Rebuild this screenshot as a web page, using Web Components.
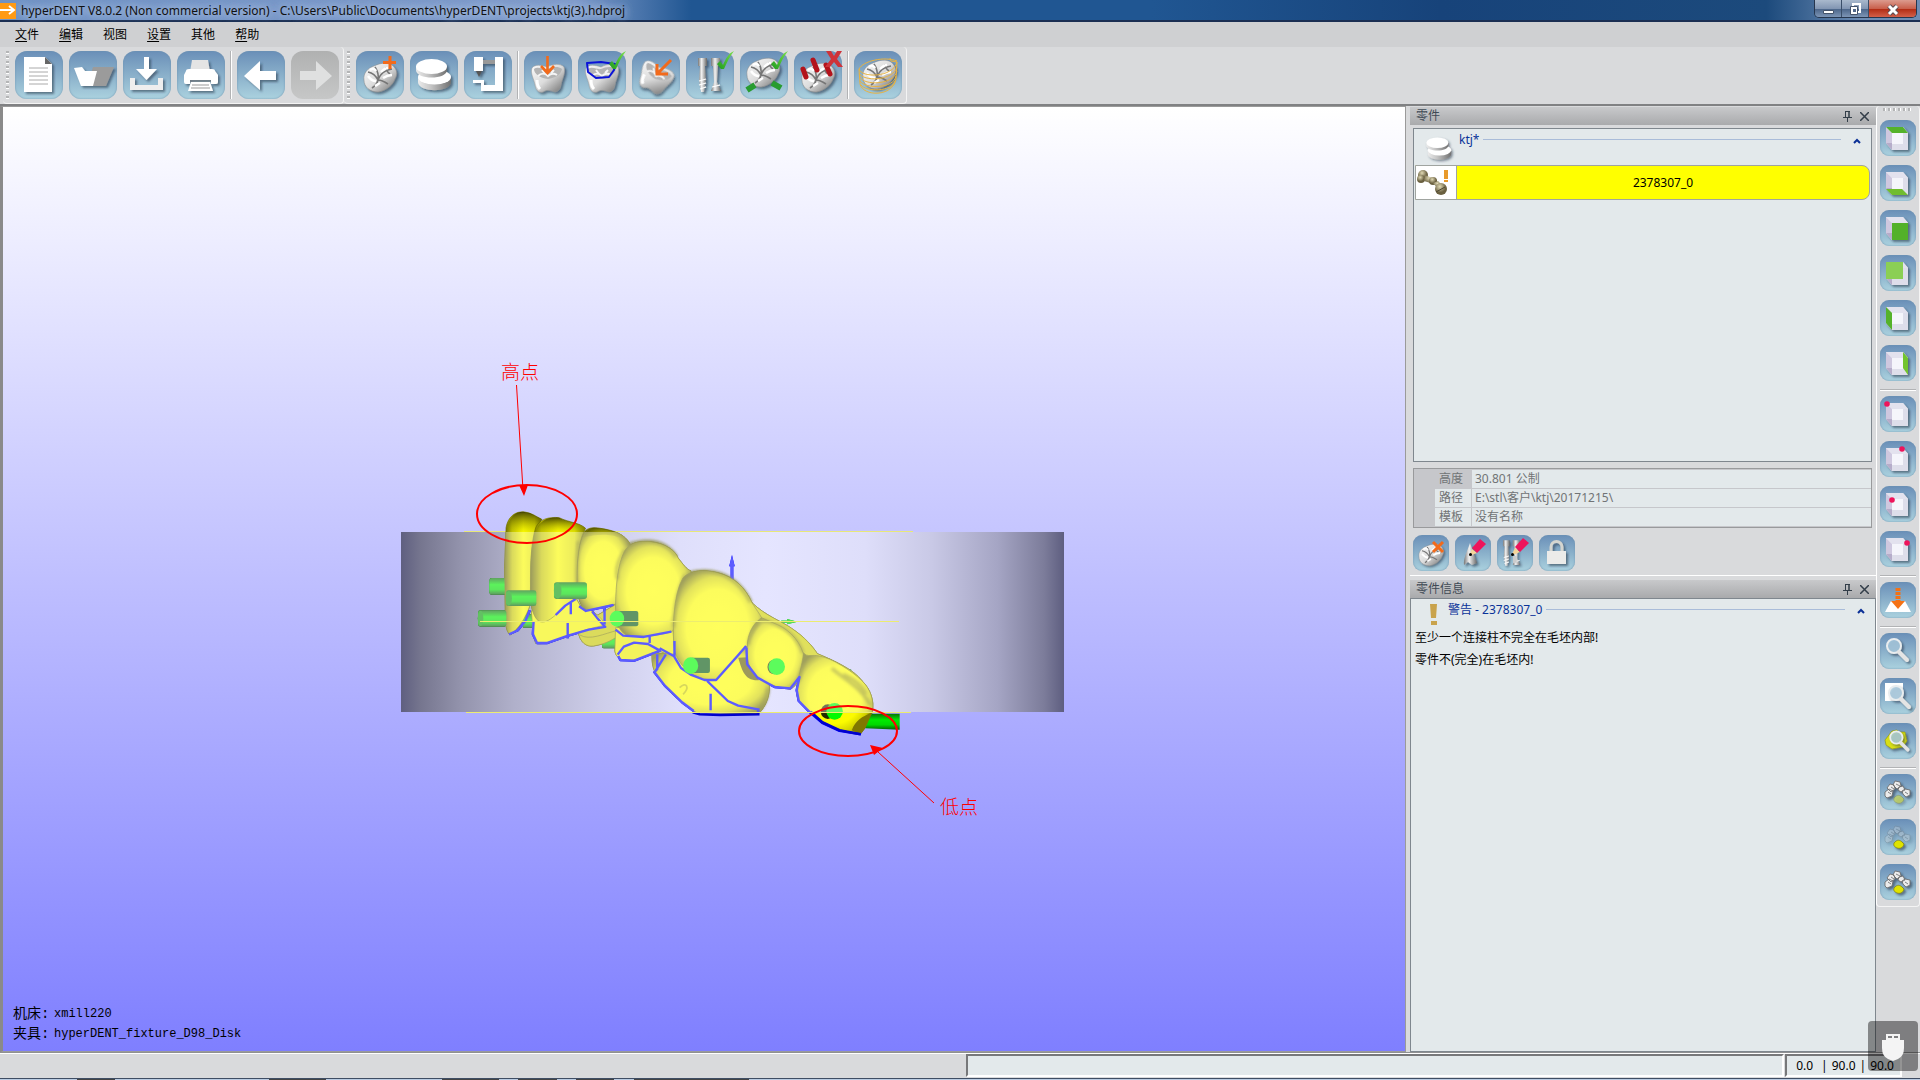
<!DOCTYPE html>
<html lang="zh-CN">
<head>
<meta charset="utf-8">
<meta name="viewport" content="width=device-width, initial-scale=1">
<title>hyperDENT V8.0.2</title>
<style>
  html, body { height: 100%; margin: 0; }
  body {
    font: 12px/16px "Noto Sans", "Noto Sans CJK SC", sans-serif;
    color: #111;
    background: #d9dadc;
    overflow: hidden;
  }
</style>
</head>
<body>
<dent-app></dent-app>

<script>
// Shared gradients, every icon svg carries its own copy because ids are scoped to the shadow root
const ICON_DEFS = `
  <defs>
    <linearGradient id="w" x1="0" y1="0" x2="1" y2="1"><stop offset="0" stop-color="#fbfbfb"/><stop offset=".5" stop-color="#dcdcdc"/><stop offset="1" stop-color="#6d6d6d"/></linearGradient>
    <linearGradient id="m" x1="0" x2="1"><stop offset="0" stop-color="#777"/><stop offset=".4" stop-color="#f2f2f2"/><stop offset="1" stop-color="#666"/></linearGradient>
    <linearGradient id="d" x1="0" x2="1"><stop offset="0" stop-color="#ececec"/><stop offset=".4" stop-color="#c4c4c4"/><stop offset="1" stop-color="#707070"/></linearGradient>
    <linearGradient id="g" x1="0" y1="1" x2="1" y2="0"><stop offset="0" stop-color="#1e9c1e"/><stop offset="1" stop-color="#7be04c"/></linearGradient>
    <filter id="s" x="-20%" y="-20%" width="150%" height="150%"><feDropShadow dx="2" dy="2" stdDeviation="1.2" flood-color="#234" flood-opacity=".55"/></filter>
    <filter id="b" x="-10%" y="-10%" width="120%" height="120%"><feGaussianBlur stdDeviation=".6"/></filter>
  </defs>`;

const TOOTH_TOP = `<g filter="url(#s)"><path d="M8 29C7 22 12 17 18 15c6-3 13-4 18-1 5 4 6 9 3 14-2 6-9 12-17 13C14 41 8 36 8 29z" fill="url(#w)" stroke="#888" stroke-width=".5"/>
  <g fill="none" filter="url(#b)"><path d="M12 21c5 1 8 4 10 8 2-6 7-10 14-11M22 29c4 0 7 2 10 4M19 16c2 3 4 8 3 13-1 4-3 6-6 8M30 16c0 3 1 5 4 7" stroke="#767676" stroke-width="1.600"/>
  <path d="M12 25c2 3 4 5 8 5M14 19c3-2 5-1 6 1M25 21c2-2 4-4 7-4M27 27c3-2 6-3 9-3M19 35c2-1 3-2 5-3" stroke="#fff" stroke-width="2.400"/></g></g>`;
const TOOTH_SIDE = `<g filter="url(#s)"><path d="M8 17c3-4 9-3 15-1 6-3 13-4 17 0 2 6-2 12-3 18-1 6-5 8-9 6-4-1-6-1-9 1-5 1-7-2-8-7C10 28 6 22 8 17z" fill="url(#w)" stroke="#999" stroke-width=".5"/>
  <g filter="url(#b)"><path d="M10 18c5-3 9 1 13 0 5-2 11-3 15 0-1 6-7 9-14 10C16 27 10 23 10 18z" fill="#b4b4b4"/>
  <path d="M14 25c3-3 7-3 10 0 3-3 6-3 9-1M18 19l3 4M30 19l-3 3" stroke="#f4f4f4" stroke-width="2" fill="none"/>
  <path d="M13 29c0 4 1 7 3 9" stroke="#fff" stroke-width="3" fill="none"/></g></g>`;
const CHECK = `<path d="M31 13l3-3 3 4C40 7 43 2 48 0 44 5 41 11 38 18h-3z" fill="url(#g)"/>`;
const DISKS = `<g filter="url(#s)"><path d="M8 26v5c0 11 33 11 33 0v-5z" fill="url(#d)"/><ellipse cx="24.500" cy="26" rx="16.500" ry="7.500" fill="#fff"/><path d="M6 15v4c0 10 31 10 31 0v-4z" fill="url(#d)"/><ellipse cx="21.500" cy="15.500" rx="15.500" ry="7.500" fill="#fff"/></g>`;
const LENS = `<circle cx="14" cy="13" r="7" fill="#a9cbe0" fill-opacity=".8" stroke="#e9edef" stroke-width="2"/><path d="M19 19l8 8" stroke="#e4e4e4" stroke-width="4" stroke-linecap="round"/>`;

// The view cube; face is the highlighted polygon, dot the highlighted corner
function cube(face, dot) {
  return `<g filter="url(#s)"><path d="M6 7h17l5 6v17H12l-6-7z" fill="#dedeea"/>
    <path d="M6 7l6 6v17l-6-7z" fill="#cfc8df"/><path d="M6 23h6v7z" fill="#b6adca"/><path d="M6 7h17l5 6H12z" fill="#e3e2ee"/>
    <path d="M12 13h11v11H12z" fill="#f5f5fb"/>${face || ''}</g>${dot ? `<circle cx="${dot[0]}" cy="${dot[1]}" r="2.8" fill="#ee145b"/>` : ''}`;
}

// Tooth arch with one separate tooth in front
function arch(body, tooth) {
  return `<g filter="url(#s)"><g opacity="${body}" fill="#ececec" stroke="#666" stroke-width=".8">
    <path d="M5 18l4-3 4 2-1 5-5 2-2-2zM7 14l3-4 4 1 1 4-4 3zM13 11l2-4 5 1 1 4-4 3zM19 13l4-1 2 4-4 2-3-2zM22 17l3-2 5 1v5l-4 2-3-3z"/>
    <path d="M8 18l3 2M11 13l3 2M16 10l4 2M25 18l3 2" fill="none"/></g>
    <path d="M14 24c3-4 6-3 8-1l2 2c-1 4-4 5-7 4-2-1-4-2-3-5z" fill="#dfe300" stroke="#777a10" stroke-width=".7" opacity="${tooth}"/></g>`;
}

const IMPLANTS = `<g filter="url(#s)" fill="url(#m)"><path d="M12 7h9v8h-2l1 14-2 12h-3l-2-12 1-14h-2z"/><path d="M25 7h9v8h-2l-1 16 4 9H25l3-9-1-16h-2z"/><path d="M13 30l7-2M13 34l7-2M14 38l6-2M26 36l8-2" stroke="#fff" stroke-width="1.2"/></g>`;

const ICONS = {
  'new': `<g filter="url(#s)"><path d="M9 6h21l7 7v28H9z" fill="#fff"/><path d="M30 6v7h7z" fill="#666"/></g><path d="M14 17h19M14 21h19M14 25h19M14 29h19M14 33h19" stroke="#aaa"/>`,
  'open': `<g filter="url(#s)"><path d="M18 35l6-19h21l-8 19z" fill="#9b9b9b"/><path d="M5 17l8-1 3 4h12l-4 15H12z" fill="#fff"/></g>`,
  'save': `<g filter="url(#s)"><path d="M7 27h5v7h23v-7h5v12H7z" fill="#eee"/><path d="M21 6h5v12h8L23.500 29 13 18h8z" fill="#fff"/></g>`,
  'print': `<g filter="url(#s)"><path d="M15 9h16l2 12H13z" fill="#e4e4e4"/><path d="M9 20q0-2 3-2h23q3 0 3 2l3 4v7q0 2-2 2h-5v-4H13v4H9q-2 0-2-2v-7z" fill="#fff"/><path d="M14 31h19l3 9H11z" fill="#fff"/></g><path d="M13 30h21" stroke="#888"/><path d="M15 34h17M14 37h19" stroke="#999"/>`,
  'undo': `<path filter="url(#s)" d="M7 25L23 10v10h16v9H23v10z" fill="#fff"/>`,
  'redo': `<path d="M41 25L25 10v10H9v9h16v10z" fill="#dfe0e0"/>`,
  'part-add': TOOTH_TOP + `<path d="M34 5v13M27 11.500h13" stroke="#f26a1b" stroke-width="3"/>`,
  'blank': DISKS,
  'machine': `<g filter="url(#s)"><path d="M19 9h14v4H19z" fill="#999"/><path d="M31 6h8v34H17v-8h-8v-3h11v5h11zM10 6h9v14h-9z" fill="#fff"/><path d="M12 20h6l-3 6z" fill="#555"/></g>`,
  'insert': TOOTH_SIDE + `<path d="M23.500 5v17M17 15l6.500 7 6.500-7" stroke="#f26a1b" stroke-width="2.600" fill="none"/>`,
  'margin': TOOTH_SIDE + `<path d="M9 12l14-1 14 2-1 6-5 7-13 1-8-6z" stroke="#0a12d8" stroke-width="2" fill="none" stroke-linejoin="round"/>` + CHECK,
  'direction': `<g transform="rotate(28 24 25)">${TOOTH_SIDE}</g><path d="M39 9L25 23M25 13v10h11" stroke="#f26a1b" stroke-width="3" fill="none"/>`,
  'implants': IMPLANTS + CHECK,
  'connectors': `<g transform="translate(-1 -5)">${TOOTH_TOP}</g><path d="M7 39l8-5M32 32l9 5" stroke="#289c30" stroke-width="6"/>` + CHECK,
  'sinter': TOOTH_TOP + `<path d="M9 18l3 8M19 9l4 10M32 14l4 9" stroke="#b3131b" stroke-width="5" stroke-linecap="round"/><path d="M32 0h5l3 5 3-5h5l-5 8 6 8h-5l-4-5-4 5h-5l6-8z" fill="#cf3239"/>`,
  'toolpath': `<g transform="translate(1 -3)">${TOOTH_TOP}</g><g fill="none" stroke="#e8b342"><path d="M5 18C9 10 30 5 43 10M5 18c2 9 34 9 38-7l-1 17c-3 18-33 18-36 5z"/><path d="M5 22c4 9 34 8 38-6M6 26c4 9 34 8 37-6M6 30c5 8 34 8 36-5M7 34c5 7 31 7 34-4M36 7l1 3 6 1"/></g>`,
  'view-top': cube('<path d="M6 7h17l5 6H12z" fill="#55b22b"/>'),
  'view-bottom': cube('<path d="M6 24h16l6 6H12z" fill="#6fbd2d"/>'),
  'view-front': cube('<path d="M12 13h16v17H12z" fill="#52b12c"/>'),
  'view-back': cube('<path d="M6 7h17v17H6z" fill="#8bcf55"/>'),
  'view-left': cube('<path d="M6 7l6 6v17l-6-7z" fill="#55b22b"/>'),
  'view-right': cube('<path d="M23 7l5 6v17l-5-7z" fill="#72c42d"/>'),
  'iso-1': cube('', [7, 8]),
  'iso-2': cube('', [22, 8]),
  'iso-3': cube('', [12, 14]),
  'iso-4': cube('', [27, 12]),
  'project': `<path d="M11 19h14l6 11H5z" fill="#fff"/><path d="M18 6v14" stroke="#f47216" stroke-width="5" stroke-dasharray="3 1"/><path d="M11 19h14l-7 8z" fill="#f47216"/>`,
  'zoom': `<g filter="url(#s)">${LENS}</g>`,
  'zoom-window': `<path d="M5 5h18v18H5z" fill="#fff"/><g filter="url(#s)" transform="translate(2 2)">${LENS}</g>`,
  'zoom-part': `<path filter="url(#s)" d="M5 17l7-9 5-1 2 2 6 0 2 9-4 6-11 2-6-4z" fill="#d8df12" stroke="#8b9010" stroke-width=".6"/><g filter="url(#s)" transform="translate(4 3) scale(.88)">${LENS}</g>`,
  'arch-all': arch(1, .45),
  'arch-part': arch(.25, 1),
  'arch-both': arch(1, 1),
  'part-delete': `<g transform="scale(.75)">${TOOTH_TOP}</g><path d="M20 7l10 10M30 7L20 17" stroke="#f26a1b" stroke-width="3"/>`,
  'part-edit': `<path filter="url(#s)" d="M15 8c-2 6-7 16-6 22l4-3 4 3 5-2-3-9z" fill="url(#m)"/><path d="M14 21l3-7 5 4z" fill="#f5d59b"/><path d="M17 13l8-9 6 5-9 9z" fill="#ee145b"/><circle cx="15.500" cy="19.500" r="1.500"/>`,
  'implant-edit': `<g transform="translate(-3 0) scale(.75)">${IMPLANTS}</g><g transform="translate(10 0) scale(.75)"><path d="M8 28h5v9H8z" fill="#ccc"/></g><path d="M14 21l4-8 5 4z" fill="#f5d59b"/><path d="M18 12l8-9 6 5-9 9z" fill="#ee145b"/><circle cx="15.500" cy="19.500" r="1.500"/>`,
  'lock': `<g filter="url(#s)"><path d="M12 17v-5a5.500 5.500 0 0 1 11 0v5" fill="none" stroke="#d5d5d0" stroke-width="3"/><path d="M8 16h19v13H8z" fill="#ebebe9"/></g>`
};

class ToolButton extends HTMLElement {
  connectedCallback() {
    const small = this.hasAttribute('small');
    const box = small ? 36 : 48;
    this.attachShadow({ mode: 'open' });
    this.shadowRoot.innerHTML = `
      <style>
        :host { display: block; flex: none; }
        button {
          display: block;
          width: ${box}px;
          height: ${box}px;
          padding: 0;
          border: 0;
          border-radius: ${small ? 9 : 12}px;
          background: linear-gradient(#6a8fb8, #8db3cc 55%, #abd2df);
          box-shadow: inset 0 0 2px #6d91ae;
        }
        button:disabled { background: linear-gradient(#b0b1b1, #c6c7c7); box-shadow: none; }
        svg { display: block; overflow: visible; }
      </style>
      <button type="button" aria-label="${this.getAttribute('label')}" ${this.hasAttribute('disabled') ? 'disabled' : ''}>
        <svg width="${box}" height="${box}" viewBox="0 0 ${box} ${box}">${ICON_DEFS}${ICONS[this.getAttribute('icon')]}</svg>
      </button>
    `;
  }
}
customElements.define('tool-button', ToolButton);

class TitleBar extends HTMLElement {
  connectedCallback() {
    this.attachShadow({ mode: 'open' });
    this.shadowRoot.innerHTML = `
      <style>
        :host {
          display: flex;
          align-items: flex-start;
          height: 20px;
          border-bottom: 2px solid #1a2e52;
          background: linear-gradient(90deg, #6f92c4 0, #7d9aca 30%, #205692 36%, #205692 60%, #17437a 75%, #1c4a7c 92%, #6d8cb4 97%);
        }
        .logo { width: 16px; height: 16px; margin-top: 3px; background: #ff9a13; }
        .logo svg { display: block; }
        h1 {
          margin: 0 0 0 5px;
          font-size: 12px;
          font-weight: 400;
          line-height: 21px;
          white-space: nowrap;
          text-shadow: 0 0 8px #b9cbe8, 0 0 8px #b9cbe8;
        }
        .controls {
          display: flex;
          margin-left: auto;
          margin-right: 3px;
          border: 1px solid #26364e;
          border-top: 0;
          border-radius: 0 0 5px 5px;
          overflow: hidden;
        }
        button {
          width: 27px;
          height: 17px;
          padding: 0;
          border: 0;
          border-right: 1px solid #3a4e69;
          background: linear-gradient(#a9b9cd, #8296b3 50%, #4a6488 52%, #7d95b5);
        }
        .close { width: 47px; border-right: 0; background: linear-gradient(#dc9b8e, #c9604c 50%, #b02a12 52%, #d3604a); }
        button svg { display: block; margin: auto; }
      </style>
      <span class="logo"><svg width="16" height="16" viewBox="0 0 16 16"><path d="M0 7h13M9 3l5 4-5 4" fill="none" stroke="#fff" stroke-width="2"/></svg></span>
      <h1><slot></slot></h1>
      <div class="controls">
        <button type="button" aria-label="最小化"><svg width="14" height="14"><path d="M2.500 8.500h10v3h-10z" fill="#fff" stroke="#44536a"/></svg></button>
        <button type="button" aria-label="还原"><svg width="14" height="14"><path d="M5 2h7v8H5z" fill="none" stroke="#fff" stroke-width="2"/><path d="M2.500 4.500h7v8h-7z" fill="#fff" stroke="#44536a"/><path d="M5 7h3v3H5z" fill="#53698a"/></svg></button>
        <button type="button" class="close" aria-label="关闭"><svg width="14" height="14"><path d="M3 4l8 8M11 4l-8 8" stroke="#5c4b52" stroke-width="5"/><path d="M3 4l8 8M11 4l-8 8" stroke="#fff" stroke-width="3"/></svg></button>
      </div>
    `;
  }
}
customElements.define('title-bar', TitleBar);

class MenuBar extends HTMLElement {
  connectedCallback() {
    const items = this.getAttribute('items').split(',');
    this.attachShadow({ mode: 'open' });
    this.shadowRoot.innerHTML = `
      <style>
        :host { display: block; background: #cfd0d2; }
        nav { display: flex; gap: 20px; height: 25px; padding-left: 15px; }
        button { padding: 0; border: 0; background: none; font: inherit; color: #000; }
        u { text-underline-offset: 2px; }
      </style>
      <nav>${items.map(t => `<button type="button">${t.replace(/^_(.)/, '<u>$1</u>')}</button>`).join('')}</nav>
    `;
  }
}
customElements.define('menu-bar', MenuBar);

class ToolBar extends HTMLElement {
  connectedCallback() {
    this.attachShadow({ mode: 'open' });
    this.shadowRoot.innerHTML = `
      <style>
        :host {
          display: flex;
          gap: 6px;
          padding: 4px 4px 4px 3px;
          border-right: 1px solid #f4f4f4;
          border-bottom: 1px solid #f4f4f4;
          border-radius: 4px;
        }
        .grip { width: 3px; background: repeating-linear-gradient(#b4b5b6 0 2px, #fff 2px 3px, transparent 3px 5px); }
        :host([vertical]) { flex-direction: column; gap: 9px; padding: 2px 3px 6px; border-left: 1px solid #fff; }
        :host([vertical]) .grip {
          height: 3px;
          width: auto;
          margin: 0 3px;
          background: repeating-linear-gradient(90deg, #b4b5b6 0 2px, #fff 2px 3px, transparent 3px 5px);
        }
        ::slotted(hr) { width: 2px; margin: 0 -1px; border: 0; background: linear-gradient(90deg, #b2b3b5 50%, #fff 50%); }
        :host([vertical]) ::slotted(hr) { width: auto; height: 2px; margin: -1px 0 -4px; background: linear-gradient(#b2b3b5 50%, #fff 50%); }
      </style>
      <span class="grip"></span>
      <slot></slot>
    `;
  }
}
customElements.define('tool-bar', ToolBar);

// 3D view: blank, bridge with connectors, and the two annotations
class ModelViewport extends HTMLElement {
  connectedCallback() {
    this.attachShadow({ mode: 'open' });
    this.shadowRoot.innerHTML = `
      <style>
        :host {
          display: block;
          position: relative;
          min-width: 0;
          overflow: hidden;
          background: linear-gradient(#fff, #7f7fff);
          border: 1px solid #9a9a9a;
          border-left: 3px solid #8a8a8a;
        }
        svg { display: block; position: absolute; inset: 0; width: 100%; height: 100%; }
        dl {
          position: absolute;
          left: 10px;
          bottom: 7px;
          margin: 0;
          font: 12px/20px "Liberation Mono", "Noto Sans CJK SC", monospace;
          color: #000;
        }
        dl div { display: flex; }
        dt { width: 41px; font-size: 14px; }
        dd { margin: 0; }
        .note { font: 300 19px "Noto Sans CJK SC", sans-serif; fill: #f00; }
      </style>
      <svg viewBox="3 107 1402 942" role="img" aria-label="模型视图">
        <defs>
          <linearGradient id="disk">
            <stop offset="0" stop-color="#5f5f80"/><stop offset=".03" stop-color="#76768f"/><stop offset=".09" stop-color="#9393ac"/>
            <stop offset=".17" stop-color="#b0b0ca"/><stop offset=".3" stop-color="#cdcde9"/><stop offset=".42" stop-color="#dfdffb"/>
            <stop offset=".55" stop-color="#e5e5ff"/><stop offset=".7" stop-color="#dedefa"/><stop offset=".8" stop-color="#c9c9e6"/>
            <stop offset=".9" stop-color="#a5a5c4"/><stop offset=".97" stop-color="#7c7c9a"/><stop offset="1" stop-color="#5e5e80"/>
          </linearGradient>
          <radialGradient id="t" cx=".5" cy=".52" r=".58">
            <stop offset="0" stop-color="#ff0"/><stop offset=".6" stop-color="#fbfb00"/><stop offset=".8" stop-color="#d2d200"/><stop offset="1" stop-color="#6a6a00"/>
          </radialGradient>
          <linearGradient id="t1" x2="1"><stop offset="0" stop-color="#626200"/><stop offset=".2" stop-color="#c4c400"/><stop offset=".5" stop-color="#fafa00"/><stop offset=".8" stop-color="#e0e000"/><stop offset="1" stop-color="#7c7c00"/></linearGradient>
          <linearGradient id="cap" x2="0" y2="1"><stop offset="0" stop-color="#222200" stop-opacity=".8"/><stop offset="1" stop-color="#8c8c00" stop-opacity="0"/></linearGradient>
          <linearGradient id="rod" x2="0" y2="1"><stop offset="0" stop-color="#086e08"/><stop offset=".4" stop-color="#00ea00"/><stop offset=".7" stop-color="#00d800"/><stop offset="1" stop-color="#055c05"/></linearGradient>
          <filter id="veil" color-interpolation-filters="sRGB" x="0" y="0" width="1" height="1">
            <feColorMatrix values=".64 0 0 0 .36  0 .64 0 0 .36  0 0 .64 0 .36  0 0 0 1 0"/>
          </filter>
          <filter id="soft"><feGaussianBlur stdDeviation="4"/></filter>
          <clipPath id="inside"><rect x="401" y="531" width="663" height="180"/></clipPath>
          <g id="model" transform="translate(380 340) scale(.3444 .3333)">
            <g stroke="#707000" stroke-width="2">
              <path d="M1022 720V672" stroke="#00f" stroke-width="8"/><path d="M1022 642l8 34h-16z" fill="#00f" stroke="none"/>
              <path d="M1165 842h25" stroke="#0c0" stroke-width="6"/><path d="M1182 834l30 8-30 8z" fill="#0c0" stroke="none"/>
              <g fill="url(#rod)" stroke="none"><rect x="318" y="711" width="50" height="50" rx="6"/><rect x="645" y="880" width="45" height="42" rx="5"/><rect x="415" y="820" width="30" height="40"/><rect x="1350" y="986" width="18" height="20"/></g>
              <path d="M575 870C580 905 600 918 620 915C650 910 670 900 692 885L685 790L620 830Z" fill="#c6c600"/>
              <path d="M580 882c30 18 70-4 110-14" fill="none"/>
              <path d="M440 810C442 850 445 880 452 907C480 912 510 898 545 886C580 870 620 860 655 852C640 825 620 810 582 795L568 770L480 800Z" fill="#f4f400"/>
              <path d="M684 860L682 930C685 950 700 960 730 958C760 955 790 935 812 930L858 950L850 860Z" fill="#ecec00"/>
              <path d="M790 935C788 970 795 990 805 1005C830 1045 880 1090 915 1115L1100 1118C1125 1090 1132 1060 1130 1030L1060 910L860 940Z" fill="url(#t)"/>
              <path d="M1040 950c10 30 15 70 60 68l-20-70z" fill="#666000" stroke="none"/>
              <path d="M1080 785C1120 825 1165 840 1195 862C1235 890 1255 915 1270 938C1320 960 1375 985 1400 1020L1300 1060L1080 900Z" fill="#cfcf00"/>
              <path d="M366 560C372 525 395 510 420 513C440 515 455 528 470 535C450 560 438 620 438 680L436 790C425 830 400 865 378 882C366 870 364 850 364 820L362 680Z" fill="url(#t1)"/>
              <path d="M592 575C600 560 620 558 640 562C680 568 710 580 725 607L710 780L682 790C650 795 620 808 595 806C575 790 570 740 572 690C573 640 580 600 592 575Z" fill="url(#t)"/>
              <path d="M452 560C462 535 490 527 520 530C550 545 580 545 597 562C575 600 572 660 572 720L568 775C540 790 530 800 510 822C490 840 475 848 460 840C440 820 437 790 437 740C436 660 440 600 452 560Z" fill="url(#t1)"/>
              <path d="M710 630C725 605 750 600 785 602C830 607 858 630 865 650C880 670 890 685 903 690L880 820L848 872C810 885 760 888 720 884C690 875 682 830 684 790C685 730 690 670 710 630Z" fill="url(#t)"/>
              <path d="M1066 915C1064 870 1080 835 1108 830L1140 845C1180 860 1215 890 1230 940C1232 960 1225 980 1218 1010C1210 1030 1200 1042 1190 1044C1150 1040 1110 1025 1090 1000C1070 980 1062 950 1066 915Z" fill="url(#t)"/>
              <path d="M880 710C900 688 940 685 980 695C1030 708 1060 740 1080 785C1095 810 1100 815 1108 830C1080 850 1068 880 1066 915C1040 940 1010 980 975 1018C950 1018 930 1012 905 1000C880 980 865 960 855 930C848 880 850 760 880 710Z" fill="url(#t)"/>
              <path d="M1230 935C1240 950 1255 940 1275 945C1310 950 1370 990 1400 1020C1425 1045 1435 1080 1430 1110C1425 1140 1405 1165 1395 1180C1340 1175 1290 1150 1255 1118C1225 1090 1208 1080 1210 1045C1215 1000 1225 980 1230 935Z" fill="url(#t)"/>
            </g>
            <path d="M368 574C372 525 395 510 420 513C440 515 455 528 470 535L455 574Z" fill="url(#cap)"/>
            <path d="M452 574C462 535 490 527 520 530C550 545 580 545 597 562L590 574Z" fill="url(#cap)"/>
            <path d="M592 590C600 560 620 558 640 562C680 568 710 580 722 605C690 580 640 575 592 590Z" fill="url(#cap)" opacity=".6"/>
            <path d="M1370 1168c10-30 30-40 58-54-2 25-18 50-34 66z" fill="#807800"/>
            <g fill="none" stroke="#6b6b00" stroke-width="10" opacity=".55" filter="url(#soft)">
              <path d="M712 625c-20 30-30 60-22 90M886 700c-28 60-32 110-34 160M1100 842c-20 30-30 50-30 70M720 612c60-20 110-10 140 36M890 700c60-20 140-10 186 84M1110 836c60 16 100 46 118 100M1312 982c30 30 80 50 112 110M1238 950c-10 20-20 44-22 70M576 600c-6 60-6 120-2 170M1126 1040c0 20-10 50-26 66M1345 1000c20 10 50 24 66 60"/>
            </g>
            <path d="M870 1040c20-20 30 0 10 20" fill="none" stroke="#999900" stroke-width="5" opacity=".6"/>
            <g fill="none" stroke="#00f" stroke-width="7" stroke-linejoin="round">
              <path d="M375 880l25-12 22-28 13-32M446 840l-2 40 12 26h30l60-22 60-18 48-8-24-28-14-18M568 774l-30 20-28 28M554 782v38M545 846v46M578 796l20 14 80-18M652 800v50"/>
              <path d="M684 866l22 18 60 4 80-16M783 886v20M692 945l6 12 40 2 75-30-35-20-40-4-30 12-18 24M812 922l42 24 20 35 28 20 40 16h34l60-70 27-32M855 900v48M805 940v44l-8 10 30 40 50 50 34 26M830 940l-30 50M960 1058v50M950 1020l60 60 30 14 62 12"/>
              <path d="M1064 920l2 50 30 40 50 28 46 4 26-34-8 40 6 32 34 36 34 30 50 24 62 10"/>
            </g>
            <path d="M908 1114l20 6 60 2 110-2v-14M1250 1112l34 32 50 24 62 12" fill="none" stroke="#00c" stroke-width="8"/>
            <g fill="url(#rod)"><rect x="366" y="748" width="88" height="47" rx="7"/><rect x="285" y="808" width="82" height="49" rx="7"/><rect x="505" y="724" width="96" height="50" rx="8"/><rect x="680" y="810" width="70" height="46" rx="6" fill="#085a10"/><rect x="900" y="950" width="58" height="46" rx="6" fill="#085a10"/><path d="M1428 1118h81v48l-100-4z"/></g>
            <g fill="#0b9c0b"><ellipse cx="374" cy="772" rx="9" ry="22"/><ellipse cx="292" cy="832" rx="8" ry="23"/><ellipse cx="516" cy="749" rx="11" ry="24"/></g>
            <ellipse cx="1145" cy="978" rx="20" ry="22" fill="#333800"/><ellipse cx="1300" cy="1112" rx="20" ry="22" fill="#222800"/>
            <g fill="#00fb00"><ellipse cx="688" cy="833" rx="21" ry="24"/><ellipse cx="902" cy="974" rx="22" ry="25"/><ellipse cx="1152" cy="977" rx="24" ry="25"/><ellipse cx="1320" cy="1111" rx="24" ry="25"/></g>
          </g>
        </defs>
        <rect x="401" y="531" width="663" height="180" fill="url(#disk)"/>
        <path d="M464 530.500h449" stroke="#e8e878"/>
        <use href="#model"/>
        <g clip-path="url(#inside)"><use href="#model" filter="url(#veil)"/></g>
        <path d="M466 711.500h445M480 620.500h419" stroke="#ecec70" fill="none"/>
        <g fill="none" stroke="#f00" stroke-width="2"><ellipse cx="527" cy="513" rx="50" ry="29"/><ellipse cx="848" cy="730" rx="49" ry="25"/></g>
        <path d="M516.500 384l6.500 105M934 802l-56-51" stroke="#f00"/>
        <path d="M519 484h9l-4 11zM870 744l13 3-9 7z" fill="#f00"/>
        <text class="note" x="501" y="378">高点</text>
        <text class="note" x="940" y="813">低点</text>
      </svg>
      <dl>
        <div><dt>机床:</dt><dd>xmill220</dd></div>
        <div><dt>夹具:</dt><dd>hyperDENT_fixture_D98_Disk</dd></div>
      </dl>
    `;
  }
}
customElements.define('model-viewport', ModelViewport);

class DockPanel extends HTMLElement {
  connectedCallback() {
    this.attachShadow({ mode: 'open' });
    this.shadowRoot.innerHTML = `
      <style>
        :host { display: flex; flex-direction: column; }
        header {
          display: flex;
          align-items: center;
          gap: 4px;
          height: 18px;
          padding: 0 5px 0 6px;
          background: linear-gradient(#c8c9cb, #a9aaac);
          color: #3f4a55;
        }
        h2 { margin: 0 auto 0 0; font-size: 12px; font-weight: 400; }
        button { width: 13px; height: 13px; padding: 0; border: 0; background: none; }
        svg { display: block; margin: auto; }
      </style>
      <header>
        <h2>${this.getAttribute('heading')}</h2>
        <button type="button" aria-label="固定"><svg width="9" height="11"><path d="M2.500 0v6M2 .500h5M6 0v6M0 6.500h9M4.500 7v4" fill="none" stroke="#333e49"/><path d="M5.500 0h1v6h-1z" fill="#333e49"/></svg></button>
        <button type="button" aria-label="关闭"><svg width="9" height="9"><path d="M0 0l9 9M9 0L0 9" stroke="#333e49" stroke-width="1.500"/></svg></button>
      </header>
      <slot></slot>
    `;
  }
}
customElements.define('dock-panel', DockPanel);

// Heading row with an icon, a rule and a collapse arrow
class GroupHeading extends HTMLElement {
  connectedCallback() {
    const warning = this.getAttribute('icon') === 'warning';
    this.attachShadow({ mode: 'open' });
    this.shadowRoot.innerHTML = `
      <style>
        :host { display: flex; align-items: flex-start; color: #0a3399; }
        .icon { flex: none; width: ${warning ? 29 : 34}px; }
        .icon svg { display: block; margin-left: ${warning ? 4 : 0}px; }
        h3 { margin: 0; font-size: 12px; font-weight: 400; line-height: 22px; white-space: nowrap; }
        hr { flex: 1; height: 1px; margin: 10px 12px 0 4px; border: 0; background: #a9bcd9; }
        button { width: 8px; height: 20px; margin-right: 10px; padding: 0; border: 0; background: none; }
      </style>
      <span class="icon">${warning
        ? '<svg width="20" height="28"><path d="M7 5h7l-1 14H8zM8 22h6v4H8z" fill="#c9a34c"/></svg>'
        : `<svg width="34" height="34" viewBox="4 -4 48 48">${ICON_DEFS}${DISKS}</svg>`}</span>
      <h3><slot></slot></h3>
      <hr>
      <button type="button" aria-label="折叠"><svg width="8" height="6"><path d="M1 5l3-3 3 3" fill="none" stroke="#0a2f96" stroke-width="2"/></svg></button>
    `;
  }
}
customElements.define('group-heading', GroupHeading);

class PartItem extends HTMLElement {
  connectedCallback() {
    this.attachShadow({ mode: 'open' });
    this.shadowRoot.innerHTML = `
      <style>
        :host { display: block; }
        button {
          display: flex;
          align-items: center;
          width: 100%;
          height: 35px;
          padding: 0;
          border: 1px solid #a0a4a0;
          border-radius: 0 8px 8px 0;
          background: #ff0;
          font: inherit;
          color: #000;
          overflow: hidden;
        }
        .thumb { flex: none; width: 40px; height: 33px; background: #fff; border-right: 1px solid #a0a4a0; }
        .name { flex: 1; }
      </style>
      <button type="button">
        <span class="thumb"><svg width="40" height="33">
          <defs><radialGradient id="b" cx=".4" cy=".3"><stop offset="0" stop-color="#e0d9b4"/><stop offset="1" stop-color="#6a6040"/></radialGradient></defs>
          <g fill="url(#b)"><circle cx="7" cy="9" r="5"/><circle cx="5" cy="13" r="4"/><path d="M9 9l12 5v5L8 15z"/><circle cx="17" cy="15" r="4"/><path d="M17 17l5-2 6 6-6 2z"/><circle cx="25" cy="23" r="6"/></g>
          <path d="M20 26l9-5" stroke="#4c4530"/><path d="M28 4h4v9h-4zM28 14h4v2h-4z" fill="#e89a2a"/>
        </svg></span>
        <span class="name"><slot></slot></span>
      </button>
    `;
  }
}
customElements.define('part-item', PartItem);

class PropertyTable extends HTMLElement {
  connectedCallback() {
    this.attachShadow({ mode: 'open' });
    this.shadowRoot.innerHTML = `
      <style>
        :host { display: block; border: 1px solid #999a9c; background: #c6c7cb; padding: 1px 0 0 21px; }
        table { width: 100%; border-collapse: collapse; color: #717476; }
        th, td { height: 18px; padding: 0 3px; font-weight: 400; text-align: left; line-height: 18px; background: #e3e9eb; border-bottom: 1px solid #c6c7cb; }
        th { width: 29px; padding-left: 4px; border-right: 1px solid #c6c7cb; white-space: nowrap; }
        tr:first-child th { background: #c6c7cb; }
      </style>
      <table>
        <tr><th scope="row">高度</th><td>30.801 公制</td></tr>
        <tr><th scope="row">路径</th><td>E:\\stl\\客户\\ktj\\20171215\\</td></tr>
        <tr><th scope="row">模板</th><td>没有名称</td></tr>
      </table>
    `;
  }
}
customElements.define('property-table', PropertyTable);

class StatusBar extends HTMLElement {
  connectedCallback() {
    this.attachShadow({ mode: 'open' });
    this.shadowRoot.innerHTML = `
      <style>
        :host { display: block; }
        .bar {
          display: grid;
          grid-template-columns: 964fr 818fr 117px 17px;
          gap: 1px;
          height: 23px;
          padding: 1px 0;
          border-top: 1px solid #8f9092;
          box-shadow: inset 0 1px #fff;
        }
        .cell {
          display: flex;
          align-items: center;
          box-sizing: border-box;
          border: 2px solid;
          border-color: #77787a #fff #fff #77787a;
          background: #e3e9eb;
          color: #000;
        }
        .axes { justify-content: flex-end; gap: 4px; padding-right: 6px; }
        .axes span:first-child { margin-right: 4px; }
        .edge { height: 1px; border-top: 1px solid #3f4d63; background: linear-gradient(90deg, #b9cbe2 0 4%, #444 4% 6%, #b9cbe2 6% 14%, #444 14% 17%, #b9cbe2 17% 23%, #444 23% 26%, #b9cbe2 26% 27%, #444 27% 29%, #b9cbe2 29% 30%, #444 30% 32%, #b9cbe2 32% 33%, #444 33% 39%, #b9cbe2 39%); }
      </style>
      <div class="bar">
        <span></span>
        <span class="cell"></span>
        <span class="cell axes"><span>0.0</span><span>|</span><span>90.0</span><span>|</span><span>90.0</span></span>
      </div>
      <div class="edge"></div>
    `;
  }
}
customElements.define('status-bar', StatusBar);

class UsbBadge extends HTMLElement {
  connectedCallback() {
    this.attachShadow({ mode: 'open' });
    this.shadowRoot.innerHTML = `
      <style>
        :host { display: block; position: absolute; right: 2px; bottom: 9px; }
        button { display: block; width: 50px; height: 50px; padding: 0; border: 0; border-radius: 4px; background: rgba(0, 0, 0, .42); }
        svg { display: block; }
      </style>
      <button type="button" aria-label="USB">
        <svg width="50" height="50"><path fill-rule="evenodd" d="M18 13h14v6h4v8q0 8-6 11l-5 2-5-2q-6-3-6-11v-8h4zM20 15v2h4v-2zM26 15v2h4v-2z" fill="#f4f4f4"/></svg>
      </button>
    `;
  }
}
customElements.define('usb-badge', UsbBadge);

class DentApp extends HTMLElement {
  connectedCallback() {
    const btn = (icon, label, extra = '') => `<tool-button icon="${icon}" label="${label}" ${extra}></tool-button>`;
    this.attachShadow({ mode: 'open' });
    this.shadowRoot.innerHTML = `
      <style>
        :host { display: flex; flex-direction: column; height: 100vh; position: relative; background: #d9dadc; }
        .tools { display: flex; padding-left: 3px; }
        .tools tool-bar { flex: none; }
        main {
          flex: 1;
          min-height: 0;
          display: grid;
          grid-template-columns: minmax(0, 1fr) 466px 44px;
          border-top: 2px solid #808183;
        }
        model-viewport { margin-right: 4px; }
        .side { display: flex; flex-direction: column; min-height: 0; padding-top: 1px; }
        .side .body { display: flex; flex-direction: column; padding: 3px 4px 4px 3px; border-bottom: 1px solid #fff; }
        .tree { height: 332px; border: 1px solid #7f878e; background: #e3e9eb; }
        .tree group-heading { height: 36px; padding-left: 11px; }
        part-item { margin: 0 1px; }
        property-table { margin-top: 6px; }
        .actions { display: flex; gap: 6px; margin-top: 7px; }
        .info { flex: 1; min-height: 0; margin-top: 4px; }
        .messages { flex: 1; border: 1px solid #7f878e; background: #e3e9eb; color: #000; }
        .messages group-heading { height: 28px; padding-left: 8px; }
        .messages p { margin: 0; padding-left: 4px; line-height: 22px; }
        .views { align-self: start; }
      </style>
      <title-bar>hyperDENT V8.0.2 (Non commercial version) - C:\\Users\\Public\\Documents\\hyperDENT\\projects\\ktj(3).hdproj</title-bar>
      <menu-bar items="_文件,_编辑,视图,_设置,其他,_帮助"></menu-bar>
      <div class="tools">
        <tool-bar>
          ${btn('new', '新建')}${btn('open', '打开')}${btn('save', '保存')}${btn('print', '打印')}
          <hr>
          ${btn('undo', '撤销')}${btn('redo', '重做', 'disabled')}
        </tool-bar>
        <tool-bar>
          ${btn('part-add', '添加零件')}${btn('blank', '毛坯')}${btn('machine', '机床')}
          <hr>
          ${btn('insert', '插入')}${btn('margin', '边缘线')}${btn('direction', '方向')}${btn('implants', '种植体')}${btn('connectors', '连接柱')}${btn('sinter', '烧结')}
          <hr>
          ${btn('toolpath', '刀路')}
        </tool-bar>
      </div>
      <main>
        <model-viewport></model-viewport>
        <div class="side">
          <dock-panel heading="零件">
            <div class="body">
              <div class="tree">
                <group-heading icon="blank">ktj*</group-heading>
                <part-item>2378307_0</part-item>
              </div>
              <property-table></property-table>
              <div class="actions">
                ${btn('part-delete', '删除零件', 'small')}${btn('part-edit', '编辑零件', 'small')}${btn('implant-edit', '编辑种植体', 'small')}${btn('lock', '锁定', 'small')}
              </div>
            </div>
          </dock-panel>
          <dock-panel class="info" heading="零件信息">
            <div class="messages">
              <group-heading icon="warning">警告 - 2378307_0</group-heading>
              <p>至少一个连接柱不完全在毛坯内部!</p>
              <p>零件不(完全)在毛坯内!</p>
            </div>
          </dock-panel>
        </div>
        <tool-bar class="views" vertical>
          ${['top', 'bottom', 'front', 'back', 'left', 'right'].map(v => btn('view-' + v, v, 'small')).join('')}
          <hr>
          ${[1, 2, 3, 4].map(n => btn('iso-' + n, 'iso ' + n, 'small')).join('')}
          <hr>
          ${btn('project', '投影', 'small')}
          <hr>
          ${btn('zoom', '缩放', 'small')}${btn('zoom-window', '窗口缩放', 'small')}${btn('zoom-part', '缩放到零件', 'small')}
          <hr>
          ${btn('arch-all', '全部', 'small')}${btn('arch-part', '仅零件', 'small')}${btn('arch-both', '零件和全部', 'small')}
        </tool-bar>
      </main>
      <status-bar></status-bar>
      <usb-badge></usb-badge>
    `;
  }
}
customElements.define('dent-app', DentApp);
</script>
</body>
</html>
